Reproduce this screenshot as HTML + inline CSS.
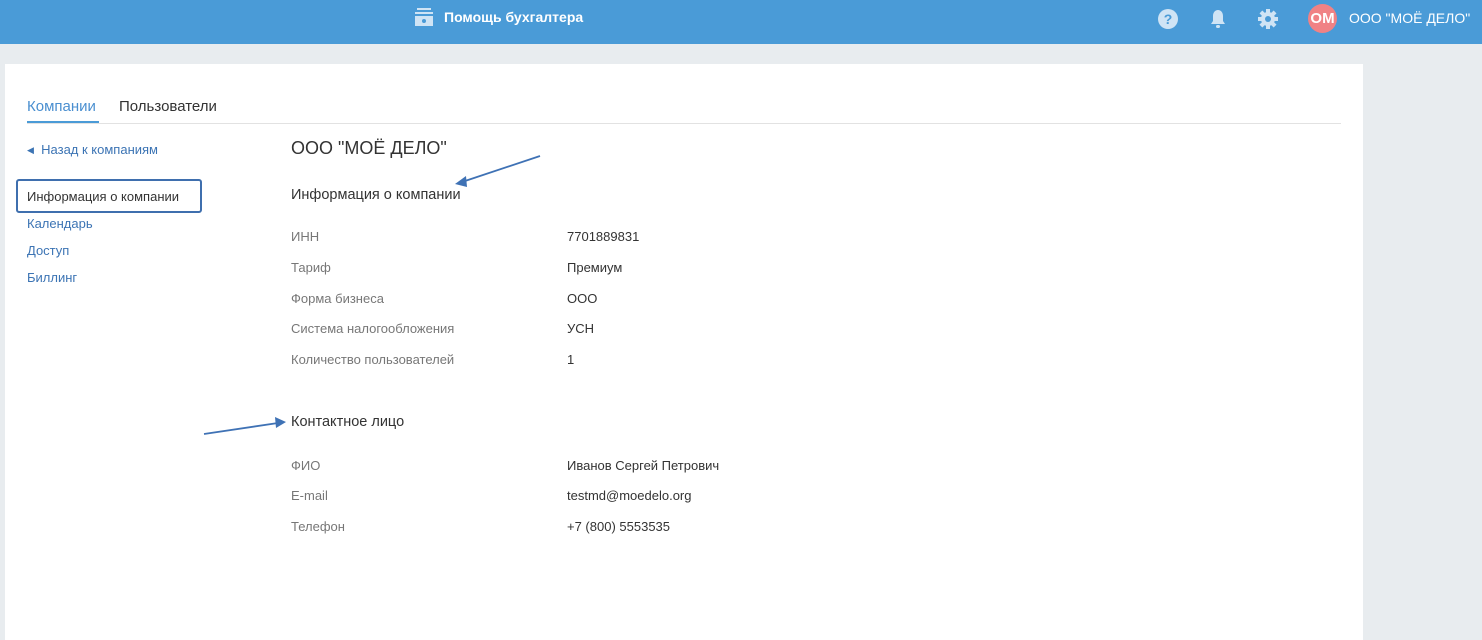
<!DOCTYPE html>
<html><head><meta charset="utf-8"><style>
*{margin:0;padding:0;box-sizing:border-box}
body{width:1482px;height:640px;overflow:hidden;background:#e8ecef;font-family:"Liberation Sans",Arial,sans-serif;position:relative}
.hdr{position:absolute;left:0;top:0;width:1482px;height:44px;background:#4a9bd7}
.abs{position:absolute;white-space:nowrap}
.panel{position:absolute;left:5px;top:64px;width:1358px;height:576px;background:#fff}
.lbl{color:#777;font-size:13px}
.val{color:#333;font-size:13px}
.link{color:#3c74b4;font-size:13px}
</style></head><body>
<div class="hdr">
  <svg class="abs" style="left:414px;top:7px" width="20" height="20" viewBox="0 0 20 20">
    <rect x="3" y="1" width="14" height="2" fill="#cfe4f5"/>
    <rect x="1" y="5" width="18" height="2" fill="#cfe4f5"/>
    <rect x="1" y="9" width="18" height="10" fill="#cfe4f5"/>
    <circle cx="10" cy="14" r="2" fill="#4a9bd7"/>
  </svg>
  <div class="abs" style="left:444px;top:9px;color:#fff;font-size:14px;font-weight:bold">Помощь бухгалтера</div>
  <svg class="abs" style="left:1158px;top:9px" width="20" height="20" viewBox="0 0 20 20"><circle cx="10" cy="10" r="10" fill="#cfe4f5"/><text x="10" y="15" text-anchor="middle" font-size="14" font-weight="bold" fill="#4a9bd7" font-family="Liberation Sans">?</text></svg>
  <svg class="abs" style="left:1209px;top:9px" width="18" height="21" viewBox="0 0 18 21"><path d="M9 1c-3 0-5 2.5-5 6v5l-2 3h14l-2-3V7c0-3.5-2-6-5-6z" fill="#cfe4f5"/><rect x="7" y="16" width="4" height="3" rx="1.5" fill="#cfe4f5"/></svg>
  <svg class="abs" style="left:1258px;top:9px" width="20" height="20" viewBox="0 0 20 20"><g fill="#cfe4f5"><circle cx="10" cy="10" r="7"/><rect x="8" y="0" width="4" height="20"/><rect x="0" y="8" width="20" height="4"/><rect x="8" y="0" width="4" height="20" transform="rotate(45 10 10)"/><rect x="8" y="0" width="4" height="20" transform="rotate(-45 10 10)"/></g><circle cx="10" cy="10" r="3" fill="#4a9bd7"/></svg>
  <div class="abs" style="left:1308px;top:4px;width:29px;height:29px;border-radius:50%;background:#f08285;color:#fff;font-weight:bold;font-size:15px;text-align:center;line-height:29px">ОМ</div>
  <div class="abs" style="left:1349px;top:10px;color:#fff;font-size:14px">ООО "МОЁ ДЕЛО"</div>
</div>
<div class="panel"></div>
<div class="abs" style="left:27px;top:98px;color:#4a8fd0;font-size:15px">Компании</div>
<div class="abs" style="left:27px;top:121px;width:72px;height:2px;background:#4a9bd7"></div>
<div class="abs" style="left:119px;top:98px;color:#333;font-size:15px">Пользователи</div>
<div class="abs" style="left:27px;top:123px;width:1314px;height:1px;background:#e2e2e2"></div>
<div class="abs link" style="left:27px;top:142px"><span style="font-size:9px;position:relative;top:-1px">◀</span>&nbsp; Назад к компаниям</div>
<div class="abs" style="left:16px;top:179px;width:186px;height:34px;border:2.5px solid #3f6fae;border-radius:3px"></div>
<div class="abs val" style="left:27px;top:189px">Информация о компании</div>
<div class="abs link" style="left:27px;top:216px">Календарь</div>
<div class="abs link" style="left:27px;top:243px">Доступ</div>
<div class="abs link" style="left:27px;top:270px">Биллинг</div>
<div class="abs" style="left:291px;top:138px;color:#333;font-size:18px">ООО "МОЁ ДЕЛО"</div>
<div class="abs" style="left:291px;top:187px;color:#333;font-size:14.5px">Информация о компании</div>
<div class="abs lbl" style="left:291px;top:229px">ИНН</div><div class="abs val" style="left:567px;top:229px">7701889831</div>
<div class="abs lbl" style="left:291px;top:260px">Тариф</div><div class="abs val" style="left:567px;top:260px">Премиум</div>
<div class="abs lbl" style="left:291px;top:291px">Форма бизнеса</div><div class="abs val" style="left:567px;top:291px">ООО</div>
<div class="abs lbl" style="left:291px;top:321px">Система налогообложения</div><div class="abs val" style="left:567px;top:321px">УСН</div>
<div class="abs lbl" style="left:291px;top:352px">Количество пользователей</div><div class="abs val" style="left:567px;top:352px">1</div>
<div class="abs" style="left:291px;top:414px;color:#333;font-size:14.5px">Контактное лицо</div>
<div class="abs lbl" style="left:291px;top:458px">ФИО</div><div class="abs val" style="left:567px;top:458px">Иванов Сергей Петрович</div>
<div class="abs lbl" style="left:291px;top:488px">E-mail</div><div class="abs val" style="left:567px;top:488px">testmd@moedelo.org</div>
<div class="abs lbl" style="left:291px;top:519px">Телефон</div><div class="abs val" style="left:567px;top:519px">+7 (800) 5553535</div>
<svg class="abs" style="left:0;top:0" width="1482" height="640">
  <line x1="540" y1="156" x2="462" y2="182" stroke="#3f72b5" stroke-width="1.8"/>
  <path d="M455 184 L466 176 L467 187 Z" fill="#3f72b5"/>
  <line x1="204" y1="434" x2="278" y2="423" stroke="#3f72b5" stroke-width="1.8"/>
  <path d="M286 422 L275 417 L276 428 Z" fill="#3f72b5"/>
</svg>
</body></html>
